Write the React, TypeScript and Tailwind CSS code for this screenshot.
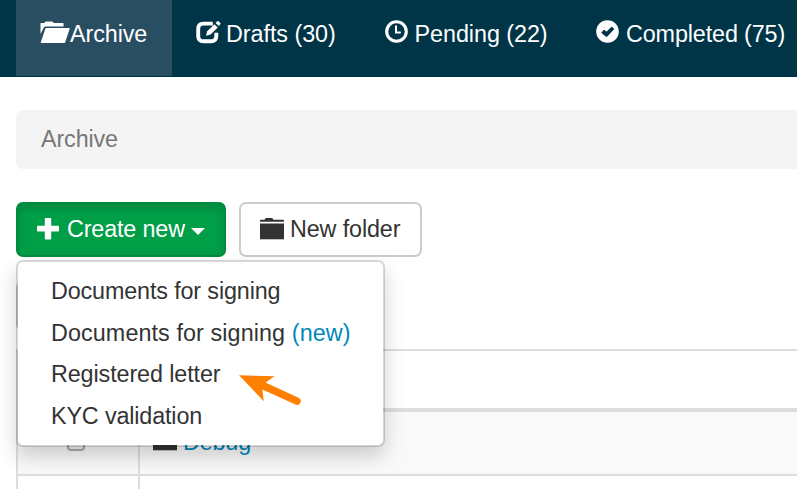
import React from "react";

function FolderOpenIcon() {
  return (
    <svg className="mt-[21px] h-[22px] w-[30px] shrink-0" viewBox="0 0 30 22" fill="#fff">
      <path d="M.5 13V2.500Q.5 2 1 2H4.300L5 .9Q5.300.5 6 .5H12Q12.700.5 13 .9L13.700 2H23Q23.500 2 23.500 2.500V5.500H5.300Q4.300 5.500 4 6.300Z" />
      <path d="M6.400 7H29.200Q30 7 29.700 7.700L25.200 21.300Q25 22 24.300 22H1.200Q.600 22 .800 21.300L5.300 7.700Q5.500 7 6.400 7Z" />
    </svg>
  );
}

function EditIcon() {
  return (
    <svg className="mt-[20px] h-[24px] w-[25px] shrink-0" viewBox="0 0 25 24" fill="none">
      <path d="M16.800 3.600H7.500Q2.200 3.600 2.200 8.900V16Q2.200 21.300 7.500 21.300H15Q20.300 21.300 20.300 16V12.800" stroke="#fff" strokeWidth="3.900" />
      <path d="M10 15.800L11.200 11.300L18.300 4.200L21.700 7.500L14.600 14.500Z" fill="#fff" />
      <path d="M19.600 3L21.300 1.200Q21.900.700 22.500 1.200L24.300 3Q24.900 3.600 24.300 4.200L22.700 6Z" fill="#fff" />
    </svg>
  );
}

function TimeIcon() {
  return (
    <svg className="mt-[20px] h-[23px] w-[23px] shrink-0" viewBox="0 0 23 23" fill="none" stroke="#fff">
      <circle cx="11.500" cy="11.500" r="9.800" strokeWidth="3.100" />
      <path d="M11 5.500V12.400H15.800" strokeWidth="2" />
    </svg>
  );
}

function OkIcon() {
  return (
    <svg className="mt-[20px] h-[23px] w-[23px] shrink-0" viewBox="0 0 23 23">
      <circle cx="11.500" cy="11.500" r="11.300" fill="#fff" />
      <path d="M5.400 12.400L7.700 10.100Q8.200 9.700 8.700 10.100L10.400 11.700L15.300 6.900Q15.700 6.500 16.200 6.900L17.900 8.600Q18.400 9.100 17.900 9.600L11.300 16.500Q10.500 17.300 9.700 16.500L5.400 13.100Q5 12.800 5.400 12.400Z" fill="#003548" />
    </svg>
  );
}

function FolderIcon({ className }: { className: string }) {
  return (
    <svg className={className} viewBox="0 0 24 22" fill="currentColor">
      <path d="M0 3.800V2.500Q0 1.800.800 1.800H4.500L5.300.500Q5.600 0 6.300 0H11.700Q12.400 0 12.700.500L13.500 1.800H23.200Q24 1.800 24 2.500V3.800Z" />
      <path d="M0 5.500H24V21.300H0Z" />
    </svg>
  );
}

const entries = [
  { label: "Documents for signing", extra: "", spacing: "h-[42px] tracking-[-0.13px]" },
  { label: "Documents for signing ", extra: "(new)", spacing: "h-[42px] tracking-[0.1px]" },
  { label: "Registered letter", extra: "", spacing: "h-[41px] tracking-[-0.1px]" },
  { label: "KYC validation", extra: "", spacing: "h-[42px] tracking-[-0.14px]" },
];

export default function App() {
  return (
    <div className="relative h-[489px] w-[797px] overflow-hidden bg-white font-['Liberation_Sans',Arial,sans-serif] text-[23.33px] leading-[33px] whitespace-pre text-[#333]">
      <nav className="flex h-[77px] w-[820px] bg-[#003548] pl-[16px] text-white">
        <div className="flex h-[76px] w-[156px] bg-[#294e62] pl-[24px]">
          <FolderOpenIcon />
          <span className="mt-[18px] tracking-[-0.08px]">Archive</span>
        </div>
        <div className="flex w-[189px] gap-[5px] pl-[24px]">
          <EditIcon />
          <span className="mt-[18px] tracking-[-0.04px]">Drafts (30)</span>
        </div>
        <div className="flex w-[211px] gap-[6.500px] pl-[24px]">
          <TimeIcon />
          <span className="mt-[18px] tracking-[-0.04px]">Pending (22)</span>
        </div>
        <div className="flex gap-[7px] pl-[24px]">
          <OkIcon />
          <span className="mt-[18px] tracking-[-0.12px]">Completed (75)</span>
        </div>
      </nav>

      <div className="mt-[33px] ml-[16px] flex h-[59px] items-center rounded-l-[7px] bg-[#f4f4f4] pl-[25px] tracking-[-0.12px] text-[#777]">
        Archive
      </div>

      <div className="mt-[33px] ml-[16px] flex h-[55px] gap-[13px]">
        <button className="flex w-[210px] items-center rounded-[7px] border-2 border-[#008a3e] bg-[#009e47] pl-[19px] text-white shadow-[inset_0_5px_8px_rgba(0,0,0,0.125)]">
          <svg className="-mt-[2px] h-[22px] w-[22px]" viewBox="0 0 22 22" fill="#fff">
            <path d="M8.500 0H13.500Q14.200 0 14.200.700V7.800H21.300Q22 7.800 22 8.500V12.800Q22 13.500 21.300 13.500H14.200V20.800Q14.200 21.500 13.500 21.500H8.500Q7.800 21.500 7.800 20.800V13.500H.700Q0 13.500 0 12.800V8.500Q0 7.800.700 7.800H7.800V.700Q7.800 0 8.500 0Z" />
          </svg>
          <span className="ml-[8px] tracking-[-0.14px]">Create new</span>
          <span className="mt-[3px] ml-[6px] border-x-[7px] border-t-[7px] border-x-transparent border-t-white" />
        </button>
        <button className="flex w-[183px] items-center rounded-[7px] border-2 border-[#ccc] bg-white pl-[19px]">
          <FolderIcon className="-mt-[2px] h-[22px] w-[24px]" />
          <span className="ml-[6px] tracking-[-0.12px]">New folder</span>
        </button>
      </div>

      <div className="mt-[24px] ml-[16px] h-[50px] w-[210px] rounded-[7px] border-2 border-[#ccc]" />

      <div className="mt-[18px] ml-[16px] grid w-[800px] grid-cols-[122px_1fr] border-t-2 border-l-2 border-[#ddd]">
        <div className="h-[61px] border-r-2 border-b-4 border-[#ddd]" />
        <div className="border-b-4 border-[#ddd]" />
        <div className="flex h-[64px] justify-center border-r-2 border-b-2 border-[#ddd] bg-[#f9f9f9]">
          <span className="mt-[21px] mr-[5px] h-[18px] w-[18px] rounded-[4px] border-2 border-[#aaa] bg-[#eee]" />
        </div>
        <div className="flex border-b-2 border-[#ddd] bg-[#f9f9f9] pl-[13px]">
          <FolderIcon className="mt-[17px] h-[22px] w-[24px]" />
          <span className="mt-[14px] ml-[6px] tracking-[-0.14px] text-[#0088bb]">Debug</span>
        </div>
        <div className="h-[30px] border-r-2 border-[#ddd]" />
        <div />
      </div>

      <div className="absolute top-[260px] left-[16px] h-[187px] w-[369px] rounded-[7px] border-2 border-black/15 bg-white bg-clip-padding pt-[8px] shadow-[0_10px_20px_rgba(0,0,0,0.175)]">
        {entries.map((entry, index) => (
          <div key={index} className={`flex items-center pl-[33px] ${entry.spacing}`}>
            {entry.label}
            {entry.extra && <span className="text-[#0088bb]">{entry.extra}</span>}
          </div>
        ))}
        <svg className="absolute top-[112px] left-[219px] h-[34px] w-[68px]" viewBox="0 0 68 34">
          <path d="M2 1.300L37.500 2.300L28.500 8.500L61.500 23.800A3.600 3.600 0 0 1 58.500 30.600L25.300 15.500L26.800 27.300Z" fill="#ff8000" />
        </svg>
      </div>
    </div>
  );
}
